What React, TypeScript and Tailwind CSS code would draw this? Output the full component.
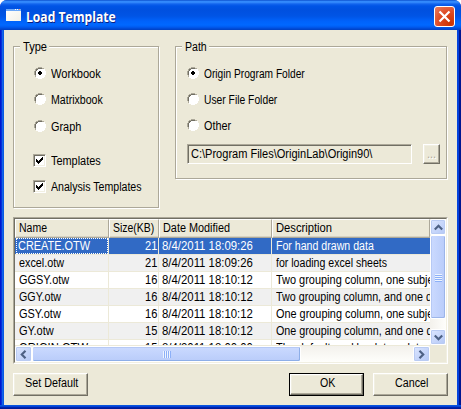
import { useLayoutEffect, useRef, useState } from "react";
import type { ReactNode } from "react";

/* Single-line label condensed to the width of the classic bitmap UI font. */
function T({ w, children, className = "" }: { w: number; children: string; className?: string }) {
  const ref = useRef<HTMLSpanElement>(null);
  const [k, setK] = useState(1);
  useLayoutEffect(() => {
    if (ref.current) setK(w / ref.current.offsetWidth);
  }, [w, children]);
  return (
    <span className={`block shrink-0 whitespace-nowrap ${className}`} style={{ width: w }}>
      <span ref={ref} className="inline-block origin-left align-top" style={{ transform: `scaleX(${k})` }}>
        {children}
      </span>
    </span>
  );
}

function Group({ title, w, className, children }: { title: string; w: number; className: string; children: ReactNode }) {
  return (
    <section className={`relative border border-[#aca899] shadow-[1px_1px_0_#fff,inset_1px_1px_0_#fff] ${className}`}>
      <div className="absolute -top-[8px] left-[6px] bg-[#ece9d8] pr-[2px] pl-[3px] leading-4">
        <T w={w}>{title}</T>
      </div>
      {children}
    </section>
  );
}

function Radio({ label, w, on = false }: { label: string; w: number; on?: boolean }) {
  return (
    <div className="flex h-4 items-center gap-[5px] leading-4">
      <svg width="12" height="12" viewBox="0 0 12 12" shapeRendering="crispEdges" className="shrink-0">
        <path d="M4 1h4v1h2v2h1v4h-1v2H8v1H4v-1H2V8H1V4h1V2h2z" fill="#fff" />
        <path d="M4 0h4v1h2v1H8V1H4v1H2v2H1v4h1v2H1V8H0V4h1V2h1V1h2z" fill="#aca899" />
        <path d="M4 1h4v1H4zM2 2h2v1H3v1H2v4H1V4h1z" fill="#716f64" />
        <path d="M10 2h1v2h1v4h-1v2h-1v1H8v1H4v-1H2v-1h2v1h4v-1h2V8h1V4h-1z" fill="#fff" />
        {on && <path d="M5 4h2v1h1v2H7v1H5V7H4V5h1z" fill="#000" />}
      </svg>
      <T w={w} className="pt-[2px]">{label}</T>
    </div>
  );
}

function Check({ label, w }: { label: string; w: number }) {
  return (
    <div className="flex h-4 items-center gap-[5px] leading-4">
      <span className="-ml-px h-[13px] w-[13px] shrink-0 border border-t-[#aca899] border-r-white border-b-white border-l-[#aca899] bg-white shadow-[inset_1px_1px_0_#716f64,inset_-1px_-1px_0_#f1efe2]">
        <svg width="11" height="11" viewBox="0 0 11 11" shapeRendering="crispEdges">
          <path d="M2 4h1v1h1v1h1V5h1V4h1V3h1V2h1v3H8v1H7v1H6v1H5v1H4V8H3V7H2z" />
        </svg>
      </span>
      <T w={w} className="pt-[2px]">{label}</T>
    </div>
  );
}

const raised = "border border-t-white border-l-white border-r-[#716f64] border-b-[#716f64] shadow-[inset_-1px_-1px_0_#aca899,inset_1px_1px_0_#f1efe2]";

function Button({ label, w, className = "" }: { label: string; w: number; className?: string }) {
  return (
    <button className={`flex h-[23px] w-[75px] items-stretch bg-[#ece9d8] leading-[19px] ${className}`}>
      <span className={`flex flex-1 justify-center pl-px ${raised}`}>
        <T w={w}>{label}</T>
      </span>
    </button>
  );
}

function Arrow({ d, className }: { d: string; className: string }) {
  return (
    <div className={`flex shrink-0 items-center justify-center rounded-[2px] border border-white bg-gradient-to-br from-[#dce6ff] to-[#b4c8f6] shadow-[inset_0_0_0_1px_#b9cbf3] ${className}`}>
      <svg width="9" height="9" viewBox="0 0 9 9" fill="none" stroke="#4d6185" strokeWidth="2.2">
        <path d={d} />
      </svg>
    </div>
  );
}

const rows: [string, number, string, string, number, string, number][] = [
  ["CREATE.OTW", 72, "21", "8/4/2011 18:09:26", 91, "For hand drawn data", 98],
  ["excel.otw", 45, "21", "8/4/2011 18:09:26", 91, "for loading excel sheets", 111],
  ["GGSY.otw", 50, "16", "8/4/2011 18:10:12", 91, "Two grouping column, one subject", 166],
  ["GGY.otw", 42, "16", "8/4/2011 18:10:12", 91, "Two grouping column, and one data", 171],
  ["GSY.otw", 42, "16", "8/4/2011 18:10:12", 91, "One grouping column, one subject", 166],
  ["GY.otw", 35, "15", "8/4/2011 18:10:12", 91, "One grouping column, and one data", 171],
  ["ORIGIN.OTW", 69, "15", "8/4/2011 18:00:00", 91, "The default workbook template", 149],
];

const heads: [string, number, string][] = [
  ["Name", 28, "w-[94px] pl-[3px]"],
  ["Size(KB)", 41, "w-[50px] pl-[3px]"],
  ["Date Modified", 67, "w-[113px] pl-[3px]"],
  ["Description", 56, "w-[158px] pl-[3px]"],
];

export default function App() {
  return (
    <div className="flex h-[409px] w-[461px] flex-col bg-white font-['Liberation_Sans',Arial,sans-serif] text-[12px] text-black">
      <div className="flex flex-1 flex-col overflow-hidden rounded-t-[7px] bg-[linear-gradient(90deg,#0019cf_0,#0019cf_1px,#0831d9_1px,#0831d9_2px,#166aee_2px,#0855dd_4px,#0855dd_457px,#0442dd_457px,#0442dd_459px,#001590_459px)]">
        <header className="flex h-[30px] shrink-0 items-center bg-[linear-gradient(180deg,#0744c2_0,#2b82f8_1px,#3a90ff_2px,#1264ee_4px,#0054e6_6px,#0050df_10px,#0054e5_16px,#0062fa_21px,#0068ff_25px,#005bf0_27px,#0047d0_29px,#0040c0_30px)] pr-[6px] pl-[6px]">
          <div className="flex h-[12px] w-[15px] shrink-0 flex-col bg-gradient-to-br from-white to-[#f2f1e8]">
            <div className="flex h-[2px] justify-end gap-px bg-[#6ca8f8] pr-px">
              <i className="h-px w-px bg-white" />
              <i className="h-px w-px bg-white" />
              <i className="h-px w-px bg-[#f79a72]" />
            </div>
          </div>
          <T w={90} className="ml-[5px] pt-[3px] font-['Open_Sans',sans-serif] text-[14px] leading-[18px] font-bold text-white [text-shadow:1px_1px_0_#0b1e80]">
            Load Template
          </T>
          <button className="mt-[3px] ml-auto flex h-[21px] w-[21px] items-center justify-center rounded-[3px] border border-white bg-[radial-gradient(circle_at_80%_85%,#cc3300_0,#de4a22_50%,#e97e62_100%)]">
            <svg width="13" height="13" viewBox="0 0 13 13" stroke="#fff" strokeWidth="2.2">
              <path d="M1.5 1.5l10 10M11.5 1.5l-10 10" />
            </svg>
          </button>
        </header>

        <main className="mr-[4px] ml-[4px] flex flex-1 flex-col bg-[#ece9d8] pr-[9px] pl-[9px]">
          <div className="flex items-start gap-[16px] pt-[16px]">
            <Group title="Type" w={24} className="h-[162px] w-[146px] pt-[18px] pl-[20px]">
              <Radio label="Workbook" w={50} on />
              <div className="mt-[10px]"><Radio label="Matrixbook" w={52} /></div>
              <div className="mt-[11px]"><Radio label="Graph" w={30} /></div>
              <div className="mt-[18px]"><Check label="Templates" w={50} /></div>
              <div className="mt-[10px]"><Check label="Analysis Templates" w={91} /></div>
            </Group>
            <Group title="Path" w={22} className="h-[133px] w-[272px] pt-[18px] pl-[11px]">
              <Radio label="Origin Program Folder" w={101} on />
              <div className="mt-[10px]"><Radio label="User File Folder" w={73} /></div>
              <div className="mt-[10px]"><Radio label="Other" w={27} /></div>
              <div className="mt-[11px] flex gap-[11px]">
                <div className="h-[20px] w-[225px] border border-t-[#aca899] border-r-white border-b-white border-l-[#aca899] pl-[3px] leading-[18px] shadow-[inset_1px_1px_0_#716f64]">
                  <T w={181}>C:\Program Files\OriginLab\Origin90\</T>
                </div>
                <button className={`flex h-[20px] w-[17px] justify-center leading-[19px] text-[#aca899] [text-shadow:1px_1px_0_#fff] ${raised}`}>
                  <T w={9}>...</T>
                </button>
              </div>
            </Group>
          </div>

          <div className="mt-[9px] h-[147px] w-[435px] border border-t-[#aca899] border-r-white border-b-white border-l-[#aca899]">
            <div className="flex h-[145px] w-[433px] flex-col overflow-hidden border border-t-[#716f64] border-r-[#f1efe2] border-b-[#f1efe2] border-l-[#716f64] bg-[#ece9d8]">
              <div className="flex h-[126px] shrink-0">
                <div className="w-[415px] overflow-hidden bg-white">
                  <div className="flex h-[19px] leading-[17px]">
                    {heads.map(([t, w, c]) => (
                      <div key={t} className={`shrink-0 border-t border-r border-b border-l border-t-white border-r-[#aca899] border-b-[#aca899] border-l-white bg-[#ece9d8] shadow-[inset_0_-1px_0_#d6d2c2] ${c}`}>
                        <T w={w}>{t}</T>
                      </div>
                    ))}
                  </div>
                  {rows.map(([name, nw, size, date, dw, desc, ew], i) => (
                    <div key={name} className={`flex h-[17px] leading-4 ${i === 0 ? "bg-[#316ac5] text-white" : i % 2 ? "bg-[#f0f0f0]" : "bg-white"}`}>
                      <div className={`w-[94px] shrink-0 border-r border-b border-[#ece9d8] ${i === 0 ? "pl-px" : "pl-[4px]"}`}>
                        {i === 0 ? (
                          <div className="h-4 w-[92px] border border-dotted border-white pl-px leading-[14px]"><T w={nw}>{name}</T></div>
                        ) : (
                          <T w={nw}>{name}</T>
                        )}
                      </div>
                      <div className="flex w-[50px] shrink-0 justify-end border-r border-b border-[#ece9d8] pr-px"><T w={12}>{size}</T></div>
                      <div className="w-[113px] shrink-0 border-r border-b border-[#ece9d8] pl-[3px]"><T w={dw}>{date}</T></div>
                      <div className="w-[158px] shrink-0 overflow-hidden border-b border-[#ece9d8] pl-[4px]"><T w={ew}>{desc}</T></div>
                    </div>
                  ))}
                </div>
                <div className="flex w-[16px] flex-col bg-gradient-to-r from-[#f3f1ec] to-[#fefefb]">
                  <Arrow d="M.8 6.5L4.5 2.8L8.2 6.5" className="h-[16px] w-[16px]" />
                  <div className="flex h-[84px] w-[16px] flex-col items-center justify-center gap-px rounded-[2px] border border-white bg-gradient-to-r from-[#cbdaff] to-[#b9ccfa] shadow-[inset_-1px_-1px_0_#9cb5e9,inset_1px_0_0_#b6c9f5]">
                    {[0, 1, 2, 3].map((n) => <i key={n} className="h-px w-[7px] bg-[#eef4fe] shadow-[0_1px_0_#8cb0f8]" />)}
                  </div>
                  <Arrow d="M.8 2.5L4.5 6.2L8.2 2.5" className="mt-auto h-[16px] w-[16px]" />
                </div>
              </div>
              <div className="mt-px flex h-[16px] w-[415px] shrink-0 bg-gradient-to-b from-[#f3f1ec] to-[#fefefb]">
                <Arrow d="M6.5 .8L2.8 4.5L6.5 8.2" className="h-[16px] w-[17px]" />
                <div className="flex h-[16px] w-[269px] items-center justify-center gap-px rounded-[2px] border border-white bg-gradient-to-b from-[#cbdaff] to-[#b9ccfa] shadow-[inset_-1px_-1px_0_#8daee8,inset_0_1px_0_#b6c9f5]">
                  {[0, 1, 2, 3].map((n) => <i key={n} className="h-[7px] w-px bg-[#eef4fe] shadow-[1px_0_0_#8cb0f8]" />)}
                </div>
                <Arrow d="M2.5 .8L6.2 4.5L2.5 8.2" className="ml-auto h-[16px] w-[17px]" />
              </div>
            </div>
          </div>

          <footer className="mt-[9px] flex">
            <Button label="Set Default" w={53} />
            <Button label="OK" w={15} className="ml-auto border border-black !leading-[17px]" />
            <Button label="Cancel" w={33} className="ml-[9px]" />
          </footer>
        </main>
        <div className="h-[4px] shrink-0 bg-[linear-gradient(180deg,#0855dd_0,#0855dd_1px,#0441d8_1px,#0441d8_2px,#0029b5_2px,#001590_4px)]" />
      </div>
    </div>
  );
}
